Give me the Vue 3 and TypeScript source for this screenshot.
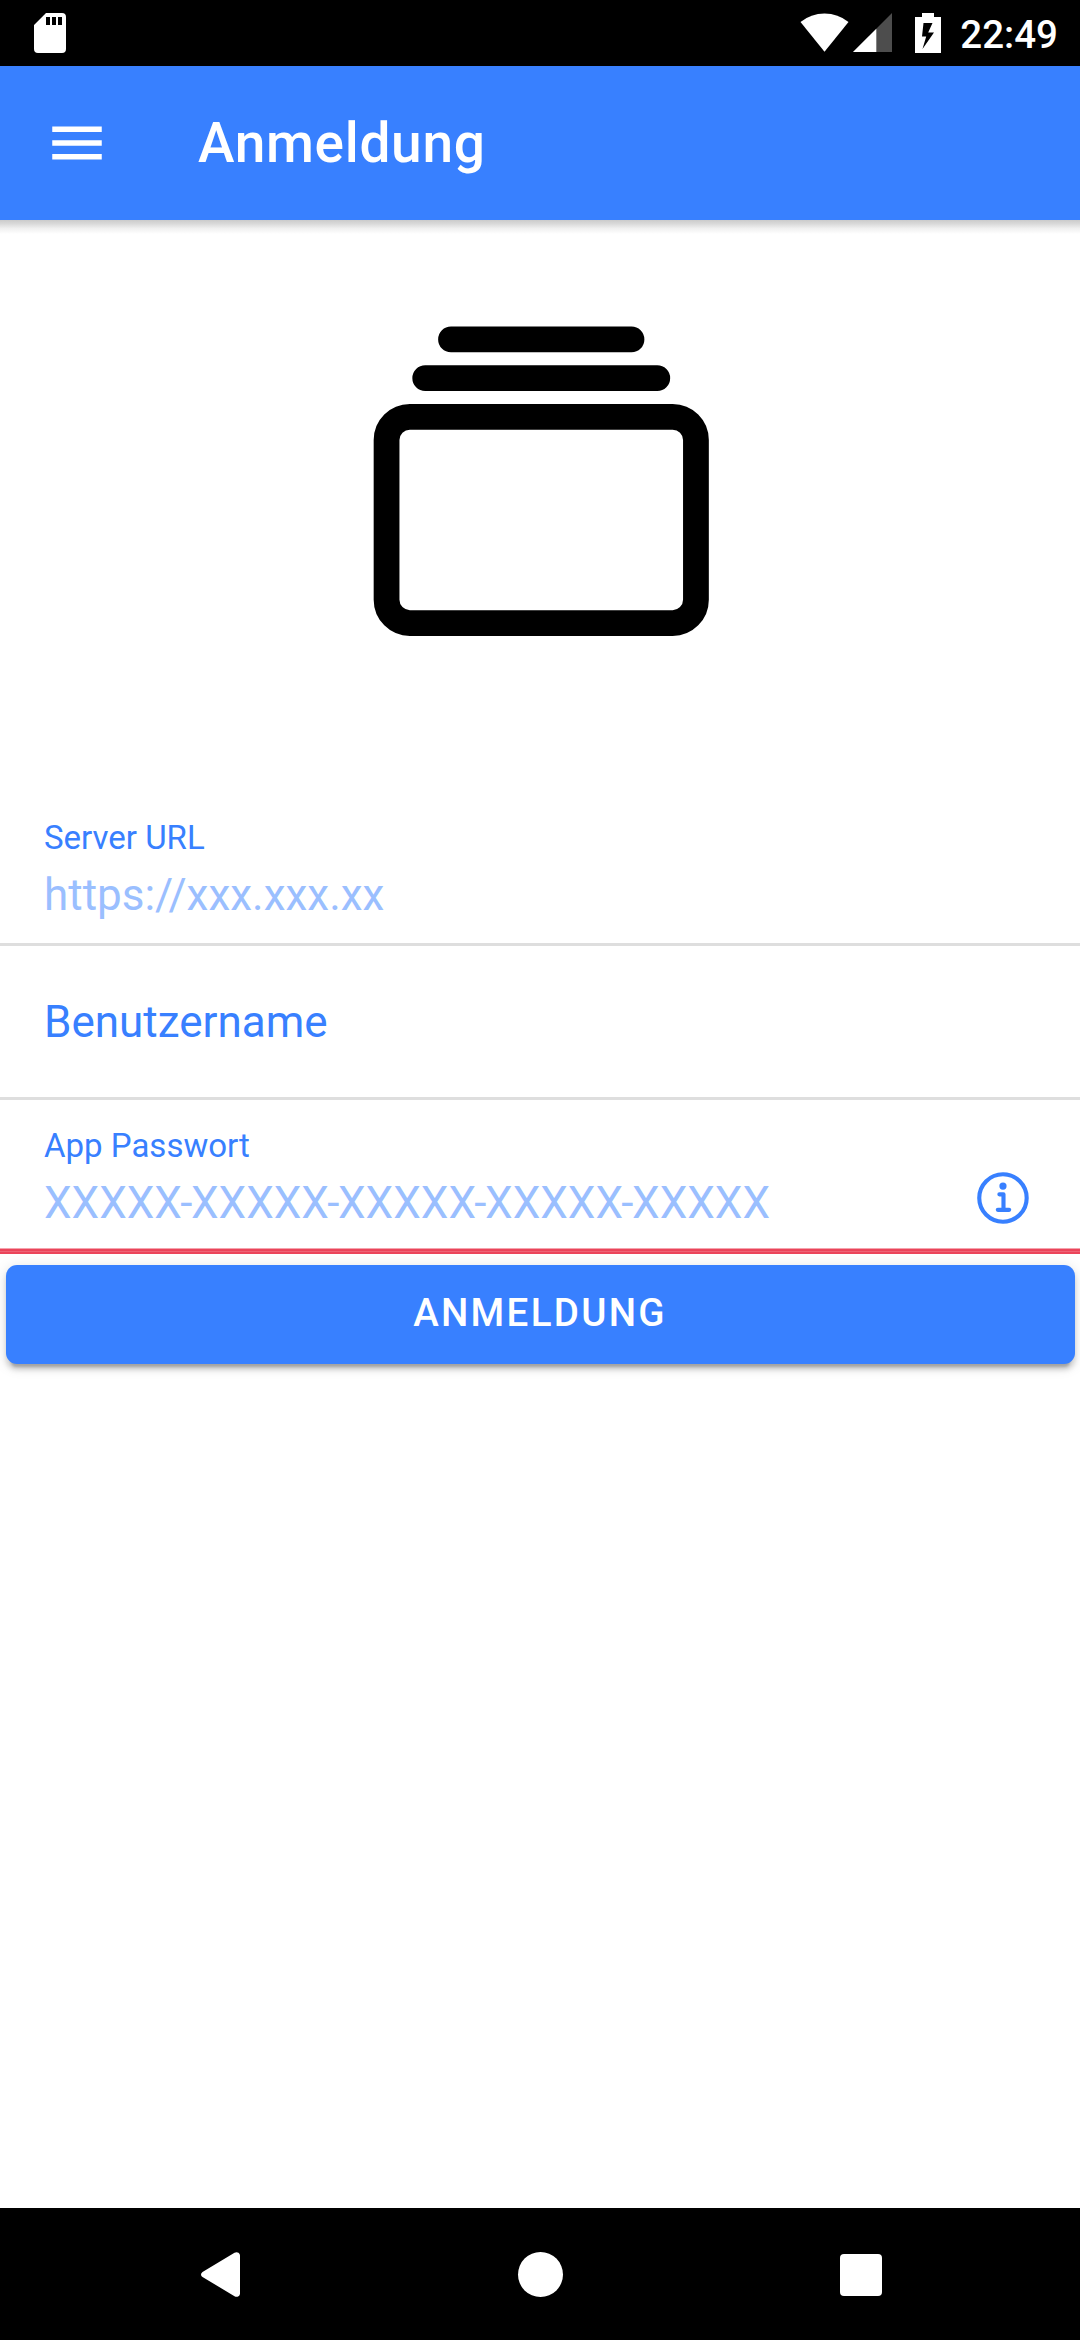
<script setup lang="ts">
interface Field {
  id: string
  label: string
  placeholder?: string
  invalid?: boolean
  info?: boolean
}

const title = 'Anmeldung'
const clock = '22:49'

const fields: Field[] = [
  { id: 'server', label: 'Server URL', placeholder: 'https://xxx.xxx.xx' },
  { id: 'user', label: 'Benutzername' },
  {
    id: 'password',
    label: 'App Passwort',
    placeholder: 'XXXXX-XXXXX-XXXXX-XXXXX-XXXXX',
    invalid: true,
    info: true,
  },
]

// Splits on hyphens so that they can be set tighter than the letters.
const pieces = (text: string): string[] => text.split(/(-)/)
</script>

<template>
  <div class="screen">
    <div class="status-bar">
      <svg class="sd-icon" width="32" height="40" viewBox="0 0 32 40">
        <path
          fill="#fff"
          fill-rule="evenodd"
          d="M12 0H28Q32 0 32 4V36Q32 40 28 40H4Q0 40 0 36V12ZM12 4V12H16V4ZM18 4V12H22V4ZM24 4V12H28V4Z"
        />
      </svg>
      <div class="status-right">
        <svg class="wifi-icon" width="49" height="39" viewBox="0 0 49 39">
          <path fill="#fff" d="M0.5 9Q11 0.5 24.5 0.5T48.5 9L24.5 38.7Z" />
        </svg>
        <svg class="signal-icon" width="39" height="39" viewBox="0 0 39 39">
          <path fill="#4d4d4d" d="M39 0V39H0Z" />
          <path fill="#fff" d="M23.3 15.7V39H0Z" />
        </svg>
        <svg class="battery-icon" width="26" height="40" viewBox="0 0 26 40">
          <path
            fill="#fff"
            fill-rule="evenodd"
            d="M7 0H19V4H26V40H0V4H7ZM8.5 10L7 23.5H11.2L7.5 36L19 19.5H13.2L17.5 10Z"
          />
        </svg>
        <span class="clock">{{ clock }}</span>
      </div>
    </div>

    <header class="toolbar">
      <svg class="menu-icon" width="66" height="66" viewBox="0 0 512 512">
        <path
          fill="#fff"
          d="M64 384h384v-42.67H64zm0-106.67h384v-42.66H64zM64 128v42.67h384V128z"
        />
      </svg>
      <h1 class="title">{{ title }}</h1>
    </header>

    <main class="content">
      <div class="logo">
        <svg width="412.5" height="412.5" viewBox="0 0 512 512" fill="none" stroke="#000" stroke-width="32">
          <rect x="64" y="176" width="384" height="256" rx="28.87" ry="28.87" />
          <path stroke-linecap="round" d="M144 80h224M112 128h288" />
        </svg>
      </div>

      <form class="list" @submit.prevent>
        <div
          v-for="field in fields"
          :key="field.id"
          class="item"
          :class="{ invalid: field.invalid, plain: !field.placeholder }"
        >
          <div class="item-text">
            <span class="label">{{ field.label }}</span>
            <span v-if="field.placeholder" class="placeholder"><span
              v-for="(piece, i) in pieces(field.placeholder)"
              :key="i"
              :class="{ hyphen: piece === '-' }"
            >{{ piece }}</span></span>
          </div>
          <svg
            v-if="field.info"
            class="info-icon"
            width="66"
            height="66"
            viewBox="0 0 512 512"
            fill="none"
            stroke="#3880ff"
            stroke-width="32"
          >
            <circle cx="248" cy="248" r="184" />
            <path stroke-linecap="round" stroke-linejoin="round" d="M220 220h32v116" />
            <path stroke-linecap="round" d="M208 340h88" />
            <circle cx="248" cy="156" r="28" fill="#3880ff" stroke="none" />
          </svg>
        </div>
        <button class="submit" type="submit">{{ title }}</button>
      </form>
    </main>

    <nav class="nav-bar">
      <svg class="back" width="39" height="45" viewBox="0 0 39 45">
        <path fill="#fff" d="M33.5 0.8Q35.5 -0.4 37.5 0.7Q39 1.7 39 3.5V41.5Q39 43.5 37.5 44.3Q35.5 45.4 33.5 44.2L1.5 25Q0 24 0 22.5T1.5 20Z" />
      </svg>
      <span class="home"></span>
      <span class="recents"></span>
    </nav>
  </div>
</template>

<style>
body {
  margin: 0;
  background: #fff;
}
</style>

<style scoped>
.screen {
  display: flex;
  flex-direction: column;
  width: 1080px;
  height: 2340px;
  overflow: hidden;
  background: #fff;
  font-family: Roboto, sans-serif;
}

.status-bar {
  display: flex;
  justify-content: space-between;
  align-items: flex-start;
  box-sizing: border-box;
  height: 66px;
  flex: none;
  padding: 13px 22px 0 34px;
  background: #000;
}

.status-right {
  display: flex;
  align-items: flex-start;
}

.signal-icon {
  margin-left: 4px;
}

.battery-icon {
  margin-left: 23px;
}

.clock {
  margin: 0 0 0 19px;
  color: #fff;
  font-size: 38.5px;
  font-weight: 500;
  line-height: 44px;
}

.toolbar {
  position: relative;
  z-index: 1;
  display: flex;
  align-items: center;
  flex: none;
  box-sizing: border-box;
  height: 154px;
  padding-left: 44px;
  background: #3880ff;
}

.toolbar::after {
  content: '';
  position: absolute;
  top: 100%;
  left: 0;
  width: 100%;
  height: 14px;
  background: linear-gradient(#cbcbcb, #d8d8d8 25%, #f0f0f0 60%, #fff);
}

.title {
  margin: 0 0 0 88px;
  color: #fff;
  font-size: 55px;
  font-weight: 500;
  line-height: 66px;
  letter-spacing: 0.6875px;
}

.content {
  flex: 1;
}

.logo {
  display: flex;
  justify-content: center;
  box-sizing: border-box;
  height: 572px;
  padding: 54.7px 0 0 3px;
}

.item {
  display: flex;
  justify-content: space-between;
  box-sizing: border-box;
  height: 154px;
  padding: 24px 43px 0 44px;
  border-bottom: 3px solid #dedede;
  color: #3880ff;
}

.item-text {
  display: flex;
  flex-direction: column;
}

.label {
  font-size: 33px;
  line-height: 44px;
}

.placeholder {
  margin-top: 9px;
  font-size: 44px;
  line-height: 52px;
  opacity: 0.5;
}

.hyphen {
  margin: 0 -1.3px 0 -1.8px;
}

.plain .label {
  margin-top: 26px;
  font-size: 44px;
  line-height: 52px;
}

.invalid {
  border-bottom: 0;
  background: linear-gradient(#f4a2ad 1px, #eb445a 1px 3px, #ee6275 3px 4px, #eb445a 4px) bottom / 100% 6px no-repeat;
}

.info-icon {
  margin-top: 41.8px;
}

.submit {
  display: block;
  width: 1069px;
  height: 99px;
  margin: 11px 5.5px;
  padding: 0 0 5px;
  border: 0;
  border-radius: 11px;
  background: #3880ff;
  box-shadow:
    0 8.25px 2.75px -5.5px rgba(0, 0, 0, 0.2),
    0 5.5px 5.5px 0 rgba(0, 0, 0, 0.14),
    0 2.75px 13.75px 0 rgba(0, 0, 0, 0.12);
  color: #fff;
  font-family: inherit;
  font-size: 38.5px;
  font-weight: 500;
  letter-spacing: 2.31px;
  text-transform: uppercase;
}

.nav-bar {
  display: flex;
  justify-content: space-between;
  align-items: center;
  flex: none;
  box-sizing: border-box;
  height: 132px;
  padding: 0 198px 0 201px;
  background: #000;
}

.back {
  margin-top: 1px;
}

.home {
  width: 45px;
  height: 45px;
  margin-left: 1px;
  border-radius: 50%;
  background: #fff;
}

.recents {
  width: 42px;
  height: 42px;
  margin-top: 1px;
  border-radius: 4px;
  background: #fff;
}
</style>
